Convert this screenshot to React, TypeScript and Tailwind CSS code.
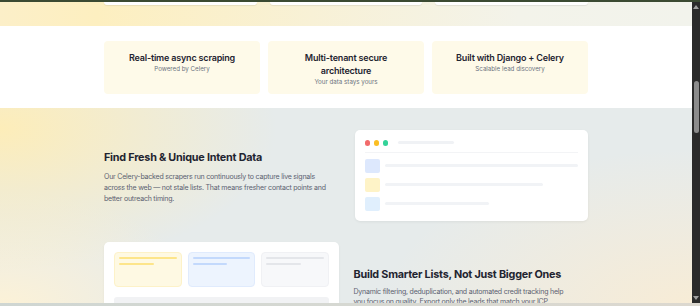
import React from "react";

const features = [
  { title: "Real-time async scraping", sub: "Powered by Celery" },
  { title: "Multi-tenant secure architecture", sub: "Your data stays yours" },
  { title: "Built with Django + Celery", sub: "Scalable lead discovery" },
];

function BrowserMock() {
  const rows = [
    { box: "bg-[#dde8fd]", w: "w-full" },
    { box: "bg-[#fef3c7]", w: "w-[82%]" },
    { box: "bg-[#e0effd]", w: "w-[54%]" },
  ];
  return (
    <div className="rounded-[5px] bg-white px-[10px] pt-[10px] pb-[10px] shadow-[0_1px_3px_rgba(0,0,0,0.06)]">
      <div className="flex items-center gap-[3.5px] pb-[6px]">
        <span className="h-[5.5px] w-[5.5px] rounded-full bg-[#f26b6b]" />
        <span className="h-[5.5px] w-[5.5px] rounded-full bg-[#fbbf24]" />
        <span className="h-[5.5px] w-[5.5px] rounded-full bg-[#34d399]" />
        <span className="ml-[6px] h-[3px] w-[56px] rounded-full bg-[#f0f2f5]" />
      </div>
      <div className="border-t border-[#f3f4f6] pt-[6px] flex flex-col gap-[5px]">
        {rows.map((r, i) => (
          <div key={i} className="flex items-center gap-[5px]">
            <span className={`h-[14px] w-[15px] shrink-0 rounded-[2px] ${r.box}`} />
            <div className="flex-1">
              <div className={`h-[3px] rounded-full bg-[#f1f3f6] ${r.w}`} />
            </div>
          </div>
        ))}
      </div>
    </div>
  );
}

function ListMock() {
  const tiles = [
    { bg: "bg-[#fef9e3] border-[#fdf2c8]", line: "bg-[#fde58a]" },
    { bg: "bg-[#edf4fe] border-[#e0ebfd]", line: "bg-[#c3d9fc]" },
    { bg: "bg-[#f7f8fa] border-[#f0f1f4]", line: "bg-[#e4e6ea]" },
  ];
  return (
    <div className="rounded-t-[5px] bg-white px-[10px] pt-[10px] h-[70px] shadow-[0_1px_3px_rgba(0,0,0,0.05)]">
      <div className="grid grid-cols-3 gap-[6px]">
        {tiles.map((t, i) => (
          <div key={i} className={`h-[35px] rounded-[4px] border px-[4px] pt-[4px] ${t.bg}`}>
            <div className={`h-[2.5px] rounded-full ${t.line}`} />
            <div className={`mt-[3.5px] h-[2.5px] w-[60%] rounded-full ${t.line}`} />
          </div>
        ))}
      </div>
      <div className="mt-[10px] h-[10px] rounded-[3px] bg-[#f1f2f4]" />
    </div>
  );
}

export default function App() {
  return (
    <div
      className="flex h-[306px] w-[700px] flex-col overflow-hidden bg-white"
      style={{ fontFamily: "Inter, 'Noto Sans', sans-serif" }}
    >
      <div className="h-[2px] shrink-0 bg-[#3b4a32]" />
      <div className="flex min-h-0 flex-1">
        <main className="min-w-0 flex-1 overflow-hidden">
          {/* hero tail */}
          <section className="h-[24px] bg-[linear-gradient(90deg,#fcefc8_0%,#fdefc0_14%,#f8f1d6_45%,#f3f3ea_75%,#f2f3ec_100%)]">
            <div className="mx-auto grid w-[484px] grid-cols-3 gap-[13px]">
              <div className="h-[3px] rounded-b-[3px] bg-white shadow-[0_1px_1px_rgba(0,0,0,0.08)]" />
              <div className="h-[3px] rounded-b-[3px] bg-white shadow-[0_1px_1px_rgba(0,0,0,0.08)]" />
              <div className="h-[3px] rounded-b-[3px] bg-white shadow-[0_1px_1px_rgba(0,0,0,0.08)]" />
            </div>
          </section>

          {/* feature strip */}
          <section className="bg-white pt-[15px] pb-[14px]">
            <div className="mx-auto grid w-[484px] grid-cols-3 gap-[8px]">
              {features.map((f) => (
                <div
                  key={f.title}
                  className="h-[53px] rounded-[4px] bg-[#fefae9] px-[16px] pt-[10px] text-center"
                >
                  <div className="text-[9px] font-semibold leading-[13px] tracking-[-0.02em] text-[#1f2430]">
                    {f.title}
                  </div>
                  <div className="text-[6.2px] leading-[9px] text-[#6b7280]">{f.sub}</div>
                </div>
              ))}
            </div>
          </section>

          {/* details */}
          <section className="bg-[#e6ebeb] bg-[radial-gradient(ellipse_40%_70%_at_0%_10%,#fdedb9_0%,rgba(253,237,185,0)_100%),radial-gradient(ellipse_45%_80%_at_100%_100%,#f8ecd5_0%,rgba(248,236,213,0)_100%),radial-gradient(ellipse_30%_60%_at_0%_100%,#fdf2d6_0%,rgba(253,242,214,0)_100%)] pt-[22px]">
            <div className="mx-auto grid w-[484px] grid-cols-2 items-center gap-x-[17px]">
              <div className="pt-[4px]">
                <h2 className="text-[10.8px] font-bold leading-[14px] tracking-[-0.02em] text-[#1f2430]">
                  Find Fresh &amp; Unique Intent Data
                </h2>
                <p className="mt-[6px] text-[7px] leading-[11px] tracking-[-0.03em] text-[#5b6170]">
                  Our Celery-backed scrapers run continuously to capture live signals
                  across the web — not stale lists. That means fresher contact points and
                  better outreach timing.
                </p>
              </div>
              <BrowserMock />
            </div>
            <div className="mx-auto mt-[21px] grid w-[484px] grid-cols-2 gap-x-[15px]">
              <ListMock />
              <div className="pt-[26px]">
                <h2 className="text-[10.8px] font-bold leading-[14px] tracking-[-0.02em] text-[#1f2430]">
                  Build Smarter Lists, Not Just Bigger Ones
                </h2>
                <p className="mt-[5px] w-[222px] text-[7px] leading-[10px] tracking-[-0.03em] text-[#5b6170]">
                  Dynamic filtering, deduplication, and automated credit tracking help
                  you focus on quality. Export only the leads that match your ICP.
                </p>
              </div>
            </div>
          </section>
        </main>

        {/* scrollbar */}
        <div className="flex w-[8px] shrink-0 flex-col items-center bg-[#2b2b2b] py-[3px]">
          <span className="h-0 w-0 border-x-[3px] border-b-[4px] border-x-transparent border-b-[#a0a0a0]" />
          <div className="mt-[72px] h-[52px] w-[5px] rounded-full bg-[#8c8c8c]" />
          <div className="flex-1" />
          <span className="h-0 w-0 border-x-[3px] border-t-[4px] border-x-transparent border-t-[#a0a0a0]" />
        </div>
      </div>
      <div className="h-[3px] shrink-0 bg-[linear-gradient(90deg,#cfd6d2,#d6d8d2_50%,#dcd8cf)]" />
    </div>
  );
}
